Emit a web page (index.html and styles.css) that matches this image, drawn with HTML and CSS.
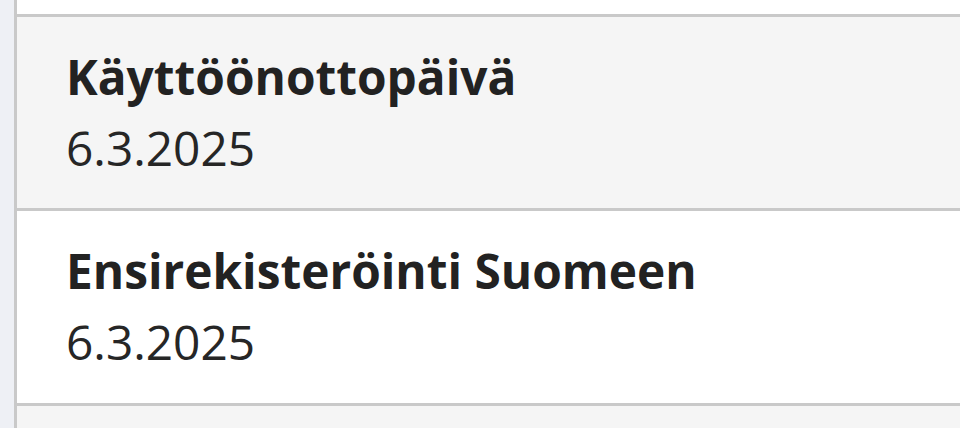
FILE: index.html
```html
<!DOCTYPE html>
<html lang="fi">
<head>
  <meta charset="UTF-8" />
  <meta name="viewport" content="width=device-width, initial-scale=1.0" />
  <title>Ajoneuvon tiedot</title>
  <link rel="stylesheet" href="styles.css">
</head>
<body>
  <div class="page">
    <div class="side"></div>
    <div class="list">
      <div class="row row-white row-top"></div>
      <div class="row row-grey">
        <div class="label">Käyttöönottopäivä</div>
        <div class="value">6.3.2025</div>
      </div>
      <div class="row row-white row-second">
        <div class="label">Ensirekisteröinti Suomeen</div>
        <div class="value">6.3.2025</div>
      </div>
      <div class="row row-grey row-bottom"></div>
    </div>
  </div>
</body>
</html>
```

FILE: styles.css
```css
* {
  margin: 0;
  padding: 0;
  box-sizing: border-box;
}

body {
  margin: 0;
  font-family: "Open Sans", "Liberation Sans", sans-serif;
  color: #222;
  overflow: hidden;
}

.page {
  display: flex;
  height: 428px;
  width: 960px;
}

.side {
  width: 17px;
  background-color: #eef0f5;
  border-right: 3px solid #c9c9c9;
}

.list {
  flex: 1;
  display: flex;
  flex-direction: column;
}

.row {
  flex-shrink: 0;
  border-bottom: 3px solid #c9c9c9;
  padding: 24px 0 0 49px;
  height: 194px;
}

.row-white { background-color: #fff; }
.row-grey { background-color: #f5f5f5; }

.row-top { height: 17px; padding: 0; }
.row-second { height: 195px; }
.row-bottom { flex: 1; height: auto; padding: 0; border-bottom: none; }

.label {
  font-weight: 700;
  font-size: 47.8px;
  line-height: 71px;
}

.value {
  font-size: 47.8px;
  line-height: 71px;
  color: #262626;
}
```
